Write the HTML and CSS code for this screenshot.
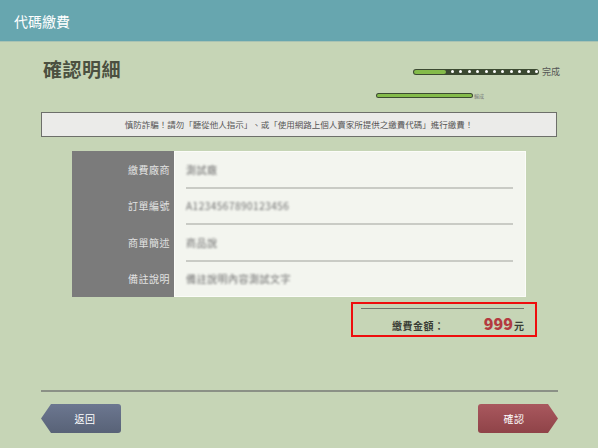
FILE: index.html
```html
<!DOCTYPE html>
<html lang="zh-Hant">
<head>
<meta charset="utf-8">
<title>代碼繳費</title>
<link rel="stylesheet" href="styles.css">
</head>
<body>
<header class="hdr">代碼繳費</header>
<main class="main">
  <div class="top">
    <h1 class="title">確認明細</h1>
    <div class="progress">
      <div class="prow prow1">
        <div class="bar bar1"><span class="fill fill1"></span><span class="dots"><i></i><i></i><i></i><i></i><i></i><i></i><i></i><i></i><i></i><i></i><i></i></span></div>
        <span class="plabel">完成</span>
      </div>
      <div class="prow prow2">
        <div class="bar bar2"><span class="fill fill2"></span></div>
        <span class="plabel small">輸成</span>
      </div>
    </div>
  </div>
  <div class="notice">慎防詐騙！請勿「聽從他人指示」、或「使用網路上個人賣家所提供之繳費代碼」進行繳費！</div>
  <div class="detail">
    <div class="labels">
      <div class="lab">繳費廠商</div>
      <div class="lab">訂單編號</div>
      <div class="lab">商單簡述</div>
      <div class="lab">備註說明</div>
    </div>
    <div class="values">
      <div class="val"><span class="blur">測試廠</span></div>
      <div class="val"><span class="blur">A1234567890123456</span></div>
      <div class="val"><span class="blur">商品說</span></div>
      <div class="val last"><span class="blur">備註說明內容測試文字</span></div>
    </div>
  </div>
  <div class="amount-wrap">
    <div class="amount">
      <div class="aline"></div>
      <div class="arow">
        <span class="alabel">繳費金額：</span>
        <span class="aval"><b class="num">999</b>元</span>
      </div>
    </div>
  </div>
  <div class="divider"></div>
  <div class="btns">
    <button class="btn back">返回</button>
    <button class="btn ok">確認</button>
  </div>
</main>
</body>
</html>
```

FILE: styles.css
```css
* { box-sizing: border-box; }
html, body { margin: 0; padding: 0; }
body {
  width: 598px;
  height: 448px;
  overflow: hidden;
  background: #c6d5b6;
  font-family: "Noto Sans CJK TC", "Noto Sans", sans-serif;
  color: #333;
}
.hdr {
  height: 42px;
  line-height: 42px;
  padding-left: 14px;
  background: #67a6af;
  color: #fff;
  font-size: 14px;
  border-bottom: 1px solid #a9c3b3;
}
.main {
  padding: 0 41px;
}
.top {
  height: 70px;
  display: flex;
  justify-content: space-between;
}
.title {
  margin: 15px 0 0 2px;
  font-size: 19px;
  font-weight: bold;
  color: #4b5040;
  line-height: 24px;
  letter-spacing: 0.5px;
}
.progress {
  width: 186px;
  margin-right: -5px;
  display: flex;
  flex-direction: column;
}
.prow {
  display: flex;
  align-items: center;
  white-space: nowrap;
}
.prow1 {
  margin-top: 25px;
  padding-left: 37px;
}
.prow2 {
  margin-top: 15px;
}
.bar {
  position: relative;
  flex-shrink: 0;
  background: #3c4a32;
  border-radius: 4px;
  display: flex;
  align-items: center;
}
.bar1 {
  width: 126px;
  height: 6px;
  padding: 1px;
}
.bar2 {
  width: 97px;
  height: 5px;
  padding: 1px;
}
.fill {
  display: block;
  height: 100%;
  background: #84bb4a;
  border-radius: 2px;
}
.fill1 { width: 38px; }
.fill2 { width: 100%; }
.dots {
  display: flex;
  gap: 5.4px;
  margin-left: 5px;
}
.dots i {
  display: block;
  width: 3px;
  height: 3px;
  background: #fff;
  border-radius: 50%;
}
.plabel {
  flex-shrink: 0;
  font-size: 9px;
  color: #555;
  margin-left: 3px;
  line-height: 9px;
}
.plabel.small {
  font-size: 5px;
  margin-left: 1px;
  color: #777;
}
.notice {
  height: 25px;
  line-height: 23px;
  border: 1px solid #6d6f6a;
  background: #ebebe9;
  text-align: center;
  font-size: 8.5px;
  color: #555;
}
.detail {
  margin: 14px 0 0 31px;
  width: 454px;
  height: 146px;
  display: flex;
}
.labels {
  width: 102px;
  background: #7b7b7b;
  display: flex;
  flex-direction: column;
}
.lab {
  flex: 1;
  display: flex;
  align-items: center;
  justify-content: flex-end;
  padding-right: 4px;
  font-size: 10px;
  color: #e2e2e2;
  letter-spacing: 0.5px;
}
.values {
  flex: 1;
  background: #f3f5ef;
  border: 1px solid #fbfcf8;
  display: flex;
  flex-direction: column;
  padding: 0 12px 0 11px;
}
.val {
  flex: 1;
  display: flex;
  align-items: center;
  border-bottom: 2px solid #c9cbc5;
}
.val.last { border-bottom: none; }
.blur {
  display: inline-block;
  font-size: 10px;
  color: #6e6e6e;
  filter: blur(1.3px);
  letter-spacing: 0.5px;
}
.amount-wrap {
  display: flex;
  justify-content: flex-end;
  margin-top: 5px;
  padding-right: 20px;
}
.amount {
  width: 186px;
  height: 35px;
  border: 2px solid #ee0d0d;
  padding: 4px 11px 0 8px;
}
.aline {
  height: 1px;
  background: #72766c;
}
.arow {
  display: flex;
  justify-content: space-between;
  align-items: baseline;
  padding-left: 31px;
  margin-top: 2px;
}
.alabel {
  font-size: 10px;
  font-weight: bold;
  color: #3a3d35;
  letter-spacing: 0.5px;
}
.aval {
  font-size: 10px;
  font-weight: bold;
  color: #3a3d35;
}
.num {
  font-size: 16px;
  color: #b43a3f;
  margin-right: 1px;
}
.divider {
  margin-top: 53px;
  height: 2px;
  background: #8b9186;
  margin-right: -1px;
}
.btns {
  display: flex;
  justify-content: space-between;
  margin-top: 12px;
  margin-right: -1px;
}
.btn {
  width: 80px;
  height: 29px;
  border: none;
  color: #fff;
  font-family: "Noto Sans CJK TC", sans-serif;
  font-size: 10px;
  letter-spacing: 0.5px;
  border-radius: 3px;
}
.back {
  background: linear-gradient(#6c7790, #586277);
  clip-path: polygon(10px 0, 100% 0, 100% 100%, 10px 100%, 0 50%);
  padding-left: 14px;
}
.ok {
  background: linear-gradient(#a9585e, #8f4348);
  clip-path: polygon(0 0, calc(100% - 10px) 0, 100% 50%, calc(100% - 10px) 100%, 0 100%);
  padding-right: 14px;
}
```
